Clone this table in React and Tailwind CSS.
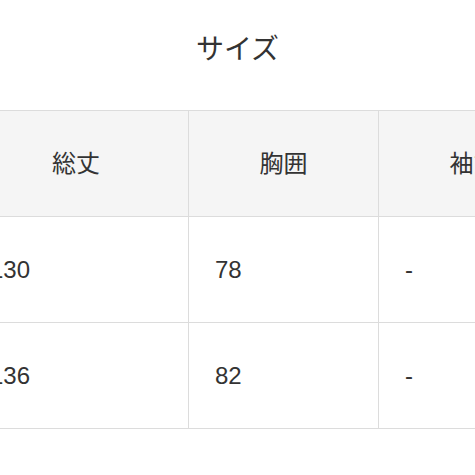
import React from "react";

const font = {
  fontFamily: '"Liberation Sans", "Noto Sans CJK JP", sans-serif',
};

const headers = ["総丈", "胸囲", "袖丈"];
const rows = [
  ["130", "78", "-"],
  ["136", "82", "-"],
];

export default function App() {
  return (
    <div
      className="w-[475px] h-[475px] overflow-hidden bg-white text-[#333]"
      style={font}
    >
      {/* Title */}
      <div className="pt-[34px] h-[110px] text-center text-[28px] leading-[32px]">
        サイズ
      </div>

      {/* Size table */}
      <div className="-ml-[37px]">
        <table className="border-collapse table-fixed w-[605px]">
          <colgroup>
            <col className="w-[225px]" />
            <col className="w-[190px]" />
            <col className="w-[190px]" />
          </colgroup>
          <thead>
            <tr className="h-[106px] bg-[#f5f5f5]">
              {headers.map((h) => (
                <th
                  key={h}
                  className="border border-[#dcdcdc] text-center font-normal text-[24px] whitespace-nowrap"
                >
                  {h}
                </th>
              ))}
            </tr>
          </thead>
          <tbody>
            {rows.map((r, i) => (
              <tr key={i} className="h-[106px]">
                {r.map((c, j) => (
                  <td
                    key={j}
                    className="border border-[#dcdcdc] text-left pl-[26px] text-[24px]"
                  >
                    {c}
                  </td>
                ))}
              </tr>
            ))}
          </tbody>
        </table>
      </div>
    </div>
  );
}
